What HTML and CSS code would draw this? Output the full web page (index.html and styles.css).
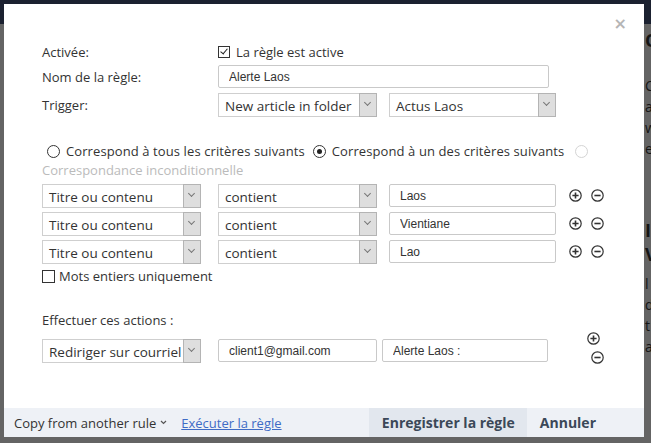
FILE: index.html
```html
<!DOCTYPE html>
<html lang="fr">
<head>
    <meta charset="UTF-8">
    <title>Règle</title>
    <link rel="stylesheet" href="styles.css">
</head>
<body>
<div class="page">
    <div class="topbar"><span class="topbar-text">Marquer tout comme lu</span></div>
    <div class="page-main">
        <div class="page-left"></div>
        <div class="page-side">
            <p class="side-h">O</p>
            <p>C</p>
            <p>a</p>
            <p>w</p>
            <p>e</p>
            <p class="side-h2">I</p>
            <p class="side-h2">V</p>
            <p>l</p>
            <p>d</p>
            <p>t</p>
            <p>a</p>
        </div>
    </div>
</div>

<div class="modal">
    <span class="close">&times;</span>
    <div class="modal-body">
        <div class="row row-active">
            <span class="lbl">Activée:</span>
            <label class="check"><span class="box checked"></span>La règle est active</label>
        </div>
        <div class="row">
            <span class="lbl">Nom de la règle:</span>
            <input class="input w-name" type="text" value="Alerte Laos">
        </div>
        <div class="row">
            <span class="lbl">Trigger:</span>
            <div class="select w-a">New article in folder<span class="arrow"></span></div>
            <div class="select w-b gap-s">Actus Laos<span class="arrow"></span></div>
        </div>

        <div class="match">
            <span class="radio"></span><span class="radio-txt">Correspond à tous les critères suivants</span>
            <span class="radio on"></span><span class="radio-txt">Correspond à un des critères suivants</span>
            <span class="radio off"></span>
        </div>
        <div class="uncond">Correspondance inconditionnelle</div>

        <div class="crit">
            <div class="select w-a">Titre ou contenu<span class="arrow"></span></div>
            <div class="select w-a gap-l">contient<span class="arrow"></span></div>
            <input class="input w-b gap-s" type="text" value="Laos">
            <div class="icons">
                <svg width="13" height="13" viewBox="0 0 13 13"><circle cx="6.5" cy="6.5" r="5.7"/><path d="M6.5 3.4v6.2M3.4 6.5h6.2"/></svg>
                <svg width="13" height="13" viewBox="0 0 13 13"><circle cx="6.5" cy="6.5" r="5.7"/><path d="M3.4 6.5h6.2"/></svg>
            </div>
        </div>
        <div class="crit">
            <div class="select w-a">Titre ou contenu<span class="arrow"></span></div>
            <div class="select w-a gap-l">contient<span class="arrow"></span></div>
            <input class="input w-b gap-s" type="text" value="Vientiane">
            <div class="icons">
                <svg width="13" height="13" viewBox="0 0 13 13"><circle cx="6.5" cy="6.5" r="5.7"/><path d="M6.5 3.4v6.2M3.4 6.5h6.2"/></svg>
                <svg width="13" height="13" viewBox="0 0 13 13"><circle cx="6.5" cy="6.5" r="5.7"/><path d="M3.4 6.5h6.2"/></svg>
            </div>
        </div>
        <div class="crit">
            <div class="select w-a">Titre ou contenu<span class="arrow"></span></div>
            <div class="select w-a gap-l">contient<span class="arrow"></span></div>
            <input class="input w-b gap-s" type="text" value="Lao">
            <div class="icons">
                <svg width="13" height="13" viewBox="0 0 13 13"><circle cx="6.5" cy="6.5" r="5.7"/><path d="M6.5 3.4v6.2M3.4 6.5h6.2"/></svg>
                <svg width="13" height="13" viewBox="0 0 13 13"><circle cx="6.5" cy="6.5" r="5.7"/><path d="M3.4 6.5h6.2"/></svg>
            </div>
        </div>
        <label class="check words"><span class="box"></span>Mots entiers uniquement</label>

        <div class="actions-title">Effectuer ces actions :</div>
        <div class="action-row">
            <div class="select w-a">Rediriger sur courriel<span class="arrow"></span></div>
            <input class="input w-a gap-l" type="text" value="client1@gmail.com">
            <input class="input w-c" type="text" value="Alerte Laos :">
            <div class="icons-col">
                <svg width="13" height="13" viewBox="0 0 13 13"><circle cx="6.5" cy="6.5" r="5.7"/><path d="M6.5 3.4v6.2M3.4 6.5h6.2"/></svg>
                <svg class="minus-shift" width="13" height="13" viewBox="0 0 13 13"><circle cx="6.5" cy="6.5" r="5.7"/><path d="M3.4 6.5h6.2"/></svg>
            </div>
        </div>
    </div>
    <div class="modal-foot">
        <span class="copy">Copy from another rule</span>
        <svg class="caret" width="7" height="5" viewBox="0 0 7 5"><path d="M1 1l2.5 2.5L6 1"/></svg>
        <a class="run" href="#">Exécuter la règle</a>
        <span class="btn btn-save">Enregistrer la règle</span>
        <span class="btn btn-cancel">Annuler</span>
    </div>
</div>
</body>
</html>
```

FILE: styles.css
```css
body, div, p, span {
    margin: 0;
    padding: 0;
}

body {
    width: 651px;
    height: 443px;
    overflow: hidden;
    background: #646464;
    font: 13px/16px "Open Sans", "Liberation Sans", sans-serif;
    color: #333;
    position: relative;
}

/* page behind the dialog */
.topbar {
    height: 24px;
    background: #1b2130;
    text-align: right;
}

.topbar-text {
    display: inline-block;
    margin-right: 110px;
    color: #3c4456;
    font-size: 12px;
    line-height: 20px;
}

.page-main {
    display: flex;
}

.page-left {
    width: 645px;
    flex: none;
}

.page-side {
    padding-top: 6px;
    color: #151515;
    font-size: 14px;
    line-height: 20px;
    white-space: nowrap;
}

.page-side p {
    margin-bottom: 1px;
}

.page-side .side-h {
    font-size: 18px;
    font-weight: 700;
    margin-bottom: 26px;
}

.page-side .side-h2 {
    font-size: 18px;
    font-weight: 700;
    line-height: 23px;
}

.page-side p:nth-child(5) {
    margin-bottom: 60px;
}

.page-side p:nth-child(7) {
    margin-bottom: 8px;
}

/* dialog */
.modal {
    position: absolute;
    left: 4px;
    top: 4px;
    width: 640px;
    height: 433px;
    background: #fff;
    display: flex;
    flex-direction: column;
}

.close {
    position: absolute;
    right: 17px;
    top: 11px;
    color: #b5b5b5;
    font: 700 16px/18px "DejaVu Sans", sans-serif;
}

.modal-body {
    flex: 1;
    padding: 40px 0 0 38px;
}

.row {
    display: flex;
    align-items: center;
    height: 23px;
    margin-top: 5px;
}

.row-active {
    height: 16px;
    margin-top: 0;
}

.lbl {
    width: 176px;
    flex: none;
}

.check {
    display: flex;
    align-items: center;
}

.box {
    width: 10px;
    height: 10px;
    border: 1px solid #333;
    margin-right: 6px;
    position: relative;
    background: #fff;
}

.box.checked::after {
    content: "";
    position: absolute;
    left: 3px;
    top: 0;
    width: 3px;
    height: 6px;
    border: solid #222;
    border-width: 0 1.5px 1.5px 0;
    transform: rotate(40deg);
}

.input {
    box-sizing: border-box;
    height: 23px;
    border: 1px solid #c9c9c9;
    border-radius: 2px;
    padding: 0 10px;
    font: 12px "Liberation Sans", Arial, sans-serif;
    color: #333;
    outline: none;
    flex: none;
}

.w-name {
    width: 331px;
}

.select {
    box-sizing: border-box;
    height: 24px;
    border: 1px solid #cfcfcf;
    border-right: none;
    padding-left: 6px;
    display: flex;
    align-items: center;
    padding-top: 2px;
    position: relative;
    flex: none;
    font-size: 13.5px;
    color: #333;
    white-space: nowrap;
}

.arrow {
    position: absolute;
    right: 0;
    top: -1px;
    bottom: -1px;
    width: 16px;
    background: #dedede;
    border: 1px solid #b4b4b4;
}

.arrow::after {
    content: "";
    position: absolute;
    left: 5px;
    top: 6px;
    width: 4px;
    height: 4px;
    border: solid #777;
    border-width: 0 1px 1px 0;
    transform: rotate(45deg);
}

.w-a {
    width: 159px;
}

.w-b {
    width: 167px;
}

.w-c {
    width: 166px;
    margin-left: 5px;
}

.gap-s {
    margin-left: 12px;
}

.gap-l {
    margin-left: 17px;
}

.match {
    display: flex;
    align-items: center;
    margin-top: 27px;
    padding-left: 5px;
    height: 16px;
}

.radio {
    width: 11px;
    height: 11px;
    border: 1px solid #333;
    border-radius: 50%;
    margin-right: 6px;
    position: relative;
    flex: none;
}

.radio.on::after {
    content: "";
    position: absolute;
    left: 3px;
    top: 3px;
    width: 5px;
    height: 5px;
    border-radius: 50%;
    background: #222;
}

.radio.off {
    border-color: #d4d4d4;
    margin-left: 3px;
}

.radio-txt {
    margin-right: 8px;
    letter-spacing: 0.1px;
}

.uncond {
    margin-top: 3px;
    color: #bbb;
}

.crit {
    display: flex;
    align-items: center;
    height: 23px;
    margin-top: 5px;
}

.uncond + .crit {
    margin-top: 6px;
}

.icons {
    display: flex;
    gap: 9px;
    margin-left: 13px;
}

svg circle {
    fill: none;
    stroke: #333;
    stroke-width: 1.2;
}

svg path {
    stroke: #333;
    stroke-width: 1.6;
    fill: none;
}

.words {
    margin-top: 5px;
    height: 16px;
}

.words .box {
    width: 11px;
    height: 11px;
    margin-right: 4px;
}

.actions-title {
    margin-top: 28px;
}

.action-row {
    display: flex;
    align-items: center;
    height: 23px;
    margin-top: 11px;
}

.icons-col {
    display: flex;
    flex-direction: column;
    gap: 6px;
    margin-left: 39px;
    margin-top: -6px;
}

.minus-shift {
    margin-left: 4px;
}

.modal-foot {
    height: 29px;
    background: #eef1f6;
    display: flex;
    align-items: center;
    white-space: nowrap;
}

.copy {
    margin-left: 10px;
    color: #333;
}

.caret {
    margin-left: 4px;
}

.caret path {
    stroke: #555;
    stroke-width: 1.2;
}

.run {
    margin-left: 14px;
    color: #3e6bc5;
}

.btn {
    align-self: stretch;
    display: flex;
    align-items: center;
    font-weight: 700;
    font-size: 14px;
    color: #3b4858;
}

.btn-save {
    margin-left: auto;
    background: #e2e7ee;
    padding: 0 12px 0 13px;
}

.btn-cancel {
    padding: 0 13px;
    margin-right: 35px;
}
```
